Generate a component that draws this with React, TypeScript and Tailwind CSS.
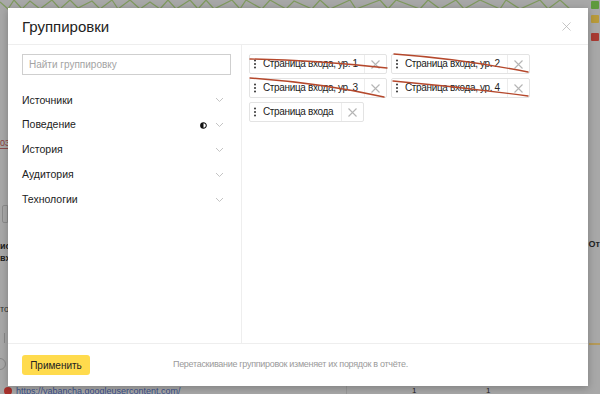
import { X } from "lucide-react";

const sections = ["Источники", "Поведение", "История", "Аудитория", "Технологии"];

const chips = [
  { label: "Страница входа, ур. 1", w: "w-[138px]" },
  { label: "Страница входа, ур. 2", w: "w-[139px]" },
  { label: "Страница входа, ур. 3", w: "w-[138px]" },
  { label: "Страница входа, ур. 4", w: "w-[139px]" },
  { label: "Страница входа", w: "w-[115px]" },
];

function Chevron() {
  return (
    <svg width="9" height="6" viewBox="0 0 9 6" className="text-[#c4c4c4]">
      <path d="M1 1l3.5 3.5L8 1" fill="none" stroke="currentColor" strokeWidth="1" />
    </svg>
  );
}

function DragDots() {
  return (
    <svg width="4" height="10" viewBox="0 0 4 10" className="shrink-0">
      <circle cx="2" cy="1.5" r="1" fill="#333" />
      <circle cx="2" cy="5" r="1" fill="#333" />
      <circle cx="2" cy="8.5" r="1" fill="#333" />
    </svg>
  );
}

function Chip({ label, w }: { label: string; w: string }) {
  return (
    <div className={`flex h-5 items-center rounded-[2px] border border-[#e3e3e3] bg-white ${w}`}>
      <div className="flex min-w-0 flex-1 items-center gap-[6px] pl-[3px]">
        <DragDots />
        <span className="whitespace-nowrap text-[10px] leading-none tracking-[-0.35px] text-[#222]">{label}</span>
      </div>
      <div className="flex h-full w-[22px] shrink-0 items-center justify-center border-l border-[#ececec]">
        <svg width="9" height="9" viewBox="0 0 9 9">
          <path d="M0.5 0.5l8 8M8.5 0.5l-8 8" stroke="#b5b5b5" strokeWidth="1.1" />
        </svg>
      </div>
    </div>
  );
}

export default function App() {
  return (
    <div
      className="relative h-[394px] w-[600px] overflow-hidden bg-[#a8a8a8] p-2"
      style={{ fontFamily: '"Liberation Sans", Arial, sans-serif' }}
    >
      {/* Приглушённая страница за модальным окном */}
      <svg className="absolute left-0 top-0" width="600" height="10" viewBox="0 0 600 10">
        <path
          d="M0 2 L8 9 L14 0 L22 9 L30 1 L40 9 L52 0 L60 9 L70 0 L78 8 L92 1 L100 9 L112 0 L118 9 L130 0 L140 9 L150 2 L160 9 L168 0 L176 9 L190 0 L198 9 L206 0 L214 9 L232 0 L240 9 L246 0 L262 9 L270 0 L286 9 L294 1 L312 9 L320 0 L330 9 L350 0 L356 9 L380 0 L388 9 L396 0 L420 9 L428 0 L440 9 L456 0 L464 9 L480 0 L500 9 L506 0 L520 9 L540 0 L548 9 L560 0 L570 9"
          fill="none"
          stroke="#7f9a5e"
          strokeWidth="1.2"
        />
      </svg>
      <div className="absolute right-[1px] top-[1px] h-[8px] w-[8px] rounded-[1px] bg-[#5f9a3c]" />
      <div className="absolute right-[1px] top-[15px] h-[8px] w-[8px] rounded-[1px] bg-[#b89a3a]" />
      <div className="absolute right-[1px] top-[33px] h-[8px] w-[8px] rounded-[1px] bg-[#a83a32]" />
      <div className="absolute left-0 top-[137px] text-[9px] text-[#8a3a3a]">03</div>
      <div className="absolute left-0 top-[148px] h-px w-[8px] bg-[#8a4a4a]" />
      <div className="absolute left-[2px] top-[205px] h-[18px] w-[6px] rounded-l-[2px] border border-[#8c8c8c]" />
      <div className="absolute left-0 top-[240px] text-[9px] font-bold leading-[12px] text-[#222]">
        ис
        <br />
        вх
      </div>
      <div className="absolute left-0 top-[303px] text-[9px] text-[#333]">то</div>
      <div className="absolute left-[4px] top-[333px] h-[10px] w-px bg-[#888]" />
      <div className="absolute -left-[6px] top-[358px] h-[12px] w-[12px] rounded-full border border-[#888]" />
      <div className="absolute right-0 top-[238px] text-[9px] font-bold text-[#222]">От</div>
      <div className="absolute right-0 top-[343px] h-[2px] w-[11px] bg-[#b59a5a]" />
      <div className="absolute bottom-[-4px] left-[4px] flex items-center gap-1">
        <span className="h-[8px] w-[8px] rounded-full bg-[#a8322c]" />
        <span className="text-[9px] text-[#3a4f8a]">https://yabancha.googleusercontent.com/</span>
      </div>
      <span className="absolute bottom-[-3px] left-[412px] text-[8px] text-[#222]">1</span>
      <span className="absolute bottom-[-3px] left-[486px] text-[8px] text-[#222]">1</span>
      <div className="absolute bottom-0 left-[346px] h-[8px] w-px bg-[#999]" />

      {/* Модальное окно */}
      <div className="relative flex h-[378px] w-[580px] flex-col bg-white shadow-[0_2px_8px_rgba(0,0,0,0.25)]">
        <div className="flex h-[37px] shrink-0 items-center justify-between border-b border-[#eeeeee] pl-[14px] pr-[14px]">
          <h1 className="text-[15px] leading-none text-[#222]">Группировки</h1>
          <X size={15} strokeWidth={1.2} className="text-[#b3b3b3]" />
        </div>

        <div className="flex min-h-0 flex-1">
          <div className="flex w-[234px] shrink-0 flex-col border-r border-[#eeeeee] pl-[14px] pr-[10px] pt-[9px]">
            <div className="flex h-[21px] items-center border border-[#cfcfcf] px-[6px]">
              <span className="text-[10px] text-[#a3a3a3]">Найти группировку</span>
            </div>
            <ul className="mt-[13px] flex flex-col pr-[7px]">
              {sections.map((s, i) => (
                <li key={s} className="flex h-[24.8px] items-center justify-between">
                  <span className="text-[10.5px] text-[#222]">{s}</span>
                  <span className="flex items-center gap-[8px]">
                    {i === 1 && (
                      <svg width="7" height="7" viewBox="0 0 8 8">
                        <circle cx="4" cy="4" r="3.2" fill="white" stroke="#111" strokeWidth="1.2" />
                        <path d="M4 0.8 A3.2 3.2 0 0 0 4 7.2 Z" fill="#111" />
                      </svg>
                    )}
                    <Chevron />
                  </span>
                </li>
              ))}
            </ul>
          </div>

          <div className="relative flex-1 pl-[7px] pt-[9px]">
            <div className="flex w-[290px] flex-wrap gap-x-[4px] gap-y-[4px]">
              {chips.map((c) => (
                <Chip key={c.label} label={c.label} w={c.w} />
              ))}
            </div>
            <svg className="pointer-events-none absolute left-0 top-0" width="300" height="70" viewBox="0 0 300 70">
              <g fill="none" stroke="#b5482c" strokeWidth="1.4" strokeLinecap="round">
                <path d="M8 14 Q 70 15 145 23" />
                <path d="M152 9 Q 220 14 286 27" />
                <path d="M8 33 Q 80 38 142 52" />
                <path d="M151 36 Q 220 42 286 51" />
              </g>
            </svg>
          </div>
        </div>

        <div className="flex h-[43px] shrink-0 items-center border-t border-[#eeeeee] pl-[14px]">
          <button className="h-5 w-[68px] rounded-[3px] bg-[#ffdb4d] text-[10px] text-[#222]">Применить</button>
          <span className="ml-[83px] text-[9px] tracking-[-0.3px] text-[#9a9a9a]">
            Перетаскивание группировок изменяет их порядок в отчёте.
          </span>
        </div>
      </div>
    </div>
  );
}
